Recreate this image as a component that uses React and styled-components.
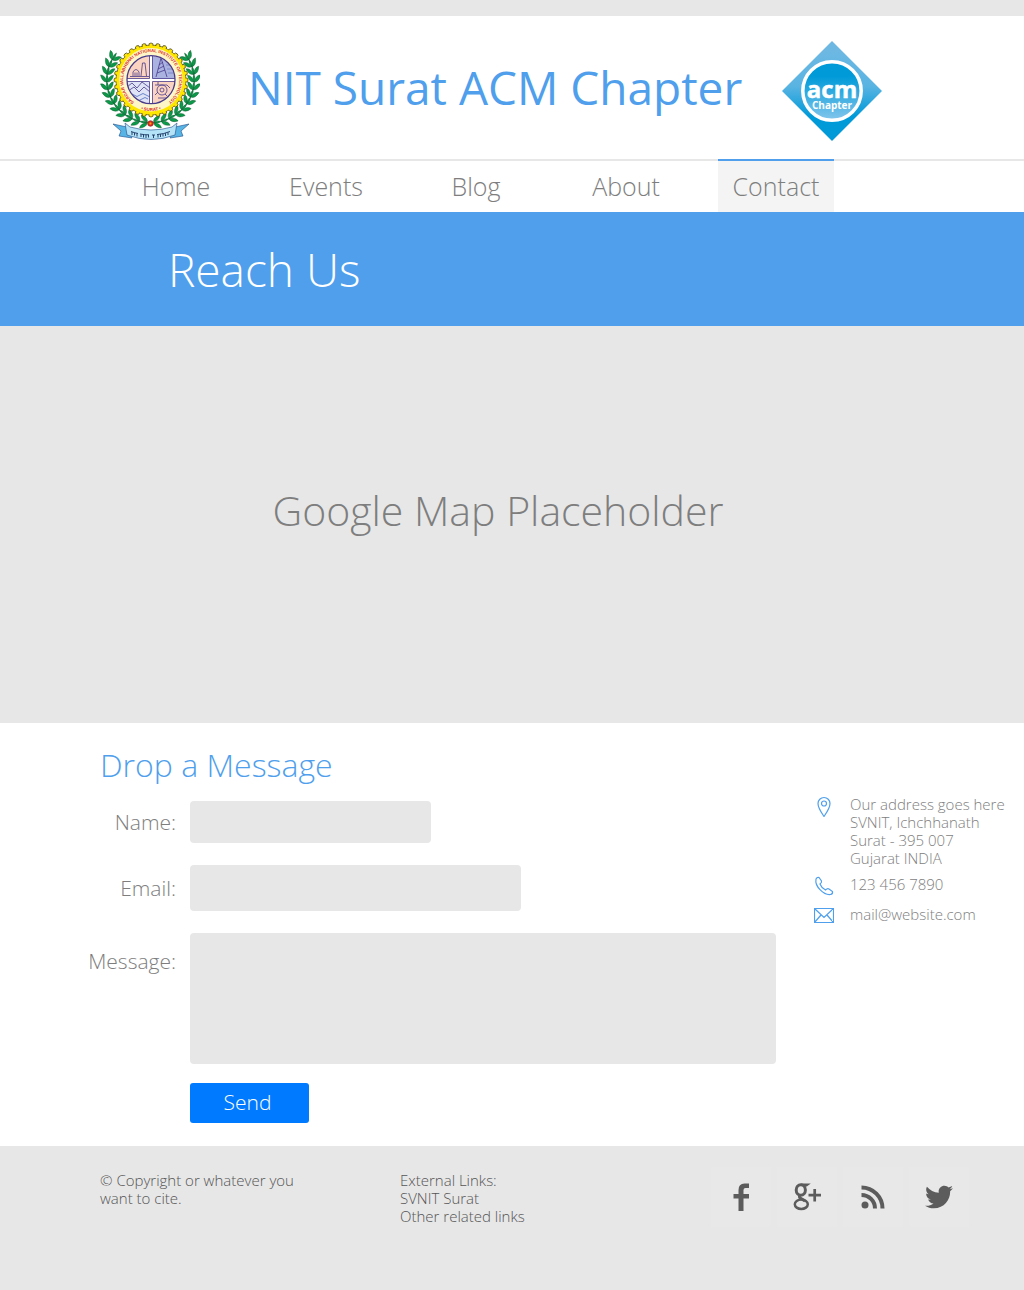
import React from "react";
import styled, { createGlobalStyle } from "styled-components";
import { FaTwitter } from "react-icons/fa";

const blue = "#4f9fed";
const grey = "#e7e7e7";

const GlobalStyle = createGlobalStyle`
  *, *::before, *::after { box-sizing: border-box; }
  body {
    margin: 0;
    background: #fff;
    color: #7e7e7e;
    font-family: "Open Sans", "Noto Sans", sans-serif;
    font-weight: 300;
  }
  input, textarea, button { font: inherit; }
`;

const Page = styled.div`
  min-height: 100vh;
  display: flex;
  flex-direction: column;
  border-top: 16px solid ${grey};
`;

const Header = styled.header`
  display: flex;
  align-items: center;
  gap: 40px;
  padding: 25px 100px 18px;
`;

const SiteTitle = styled.h1`
  margin: 0;
  padding: 0 0 8px 8px;
  color: ${blue};
  font-size: 46px;
  font-weight: 400;
  line-height: 60px;
  white-space: nowrap;
`;

const Nav = styled.nav`
  border-top: 2px solid ${grey};
  padding: 0 101px;
`;

const NavList = styled.ul`
  display: flex;
  margin: -2px 0 0;
  padding: 0;
  list-style: none;
`;

const NavItem = styled.li`
  display: flex;
  justify-content: center;
  flex: 0 0 150px;
`;

const NavLink = styled.a`
  min-width: 116px;
  border-top: 2px solid ${(p) => (p.$active ? blue : "transparent")};
  background: ${(p) => (p.$active ? "#f4f4f4" : "transparent")};
  color: inherit;
  font-size: 25px;
  line-height: 51px;
  text-align: center;
  text-decoration: none;
`;

const Banner = styled.section`
  padding: 25px 168px;
  background: ${blue};
  color: #fff;
`;

const BannerTitle = styled.h2`
  margin: 0;
  font-size: 46px;
  font-weight: 300;
  line-height: 64px;
`;

const MapArea = styled.section`
  display: flex;
  justify-content: center;
  padding: 152px 28px 181px 0;
  background: ${grey};
  font-size: 41px;
  line-height: 64px;
`;

const Main = styled.main`
  display: flex;
  justify-content: space-between;
  align-items: flex-start;
  padding: 20px 22px 23px 86px;
`;

const FormColumn = styled.section`
  flex: 0 1 690px;
`;

const FormTitle = styled.h2`
  margin: 0 0 14px 14px;
  color: ${blue};
  font-size: 32px;
  font-weight: 300;
  line-height: 44px;
`;

const Form = styled.form`
  display: grid;
  grid-template-columns: 90px minmax(0, 586px);
  column-gap: 14px;
  row-gap: 22px;
`;

const Label = styled.label`
  align-self: ${(p) => (p.$top ? "start" : "center")};
  padding-top: ${(p) => (p.$top ? 14 : 0)}px;
  font-size: 21px;
  line-height: 28px;
  text-align: right;
`;

const Field = styled.input`
  width: ${(p) => p.$width}px;
  max-width: 100%;
  height: ${(p) => p.$height}px;
  padding: 0 12px;
  border: 0;
  border-radius: 4px;
  background: ${grey};
`;

const MessageField = styled.textarea`
  display: block;
  width: 100%;
  height: 131px;
  padding: 12px;
  border: 0;
  border-radius: 4px;
  background: ${grey};
  resize: none;
`;

const SendButton = styled.button`
  grid-column: 2;
  justify-self: start;
  width: 119px;
  height: 40px;
  margin-top: -3px;
  padding: 0 4px 2px 0;
  border: 0;
  border-radius: 3px;
  background: #007aff;
  color: #fff;
  font-size: 21px;
`;

const ContactList = styled.address`
  display: grid;
  grid-template-columns: 20px 152px;
  column-gap: 16px;
  row-gap: 8px;
  padding-top: 52px;
  font-size: 15px;
  font-style: normal;
  line-height: 18px;
  white-space: nowrap;
`;

const ContactIcon = styled.svg`
  width: 20px;
  height: 22px;
  fill: none;
  stroke: ${blue};
  stroke-width: 1.2;
`;

const ContactLink = styled.a`
  padding-bottom: 4px;
  color: inherit;
  text-decoration: none;
`;

const Footer = styled.footer`
  display: flex;
  flex: 1;
  align-items: flex-start;
  min-height: 144px;
  padding: 25px 55px 24px 100px;
  background: ${grey};
  color: #555;
  font-size: 15px;
  line-height: 18px;
`;

const FooterText = styled.p`
  flex: 0 0 300px;
  margin: 0;
  padding-right: 84px;
`;

const FooterLinks = styled.div`
  display: flex;
  flex-direction: column;
  align-items: flex-start;
`;

const FooterLink = styled.a`
  color: inherit;
  text-decoration: none;
`;

const Social = styled.div`
  display: flex;
  gap: 6px;
  margin: -4px 0 0 auto;
`;

const SocialLink = styled.a`
  display: flex;
  align-items: center;
  justify-content: center;
  width: 60px;
  height: 60px;
  background: #e8e8e8;
  color: #5c5c5c;
`;

const Svg = styled.svg`
  display: block;
  flex: none;
`;

const teeth = Array.from({ length: 32 }, (_, i) => i * 11.25);
const leaves = Array.from({ length: 12 }, (_, i) => 98 + i * 10.4);

function Wreath() {
  return leaves.map((deg) => {
    const a = (deg * Math.PI) / 180;
    const x = 50.5 + 43.5 * Math.cos(a);
    const y = 39 + 42.5 * Math.sin(a);
    return (
      <g key={deg} transform={`translate(${x} ${y}) rotate(${deg + 90})`} fill="#0a9a48" stroke="#064d27" strokeWidth=".4">
        <path d="M-3 0Q-3-5 4-6.500Q4-2-3 0Z" />
        <path d="M-3 0Q-3 5 4 6.500Q4 2-3 0Z" />
        <path d="M-3 0Q1-2 5 0Q1 2-3 0Z" />
      </g>
    );
  });
}

function Emblem() {
  return (
    <Svg width="100" height="100" viewBox="0 0 100 100" role="img" aria-label="SVNIT emblem">
      <defs>
        <path id="ringTop" d="M34.100 61.200A28 28 0 1 1 69 60.500" />
        <path id="ringBottom" d="M37 66.700A31.300 31.300 0 0 0 65 66.700" />
        <clipPath id="disc"><circle cx="51" cy="38.700" r="23.500" /></clipPath>
      </defs>
      <Wreath />
      <g transform="translate(101 0) scale(-1 1)"><Wreath /></g>
      <g fill="#ffe600" stroke="#3f3a12" strokeWidth=".7">
        <circle cx="51" cy="39" r="35" />
        {teeth.map((a) => (
          <path key={a} transform={`rotate(${a} 51 39)`} d="M48.900 6L49.200 2.600Q51 1.400 52.800 2.600L53.100 6" />
        ))}
      </g>
      <circle cx="51" cy="39" r="34.600" fill="#ffe600" />
      <circle cx="51" cy="38.700" r="31.800" fill="#fff6c8" />
      <g fill="#dc2b20" fontFamily="Liberation Sans, sans-serif" fontSize="4.400" fontWeight="700">
        <text><textPath href="#ringTop">SARDAR VALLABHBHAI NATIONAL INSTITUTE OF TECHNOLOGY</textPath></text>
        <text textAnchor="middle"><textPath href="#ringBottom" startOffset="50%">• SURAT •</textPath></text>
      </g>
      <g clipPath="url(#disc)">
        <path d="M27 15H50V38H27Z" fill="#fbd3c1" />
        <path d="M52 15H76V38H52Z" fill="#aab2e0" />
        <path d="M27 40H50V63H27Z" fill="#dfe3f6" />
        <path d="M52 40H76V63H52Z" fill="#fbd3c1" />
        <g fill="none" stroke="#473a8c" strokeWidth=".8">
          <path d="M30 35.500H49M33 35V31Q36 26 39 31V35M41 35L42.500 22H45L46.500 35M35 35V31.500M37 35V31.500" />
          <path d="M56 36L61 17L67 36M57 32L65 29M58 28L64 25M59 24L63 21" />
          <path d="M66 24H75M67 28H76M68 32H76" stroke="#7080c4" />
          <path d="M27 46L32 42L37 47L42 41L50 47M28 50L34 46L39 51L44 46L50 51" />
          <path d="M28 54Q31 51 34 54T40 54T46 54T52 54M30 58Q33 55 36 58T42 58T48 58" stroke="#4a6dc0" />
          <circle cx="62" cy="49" r="5" />
          <circle cx="62" cy="49" r="2" />
          <path d="M55 44H67L70 47M55 54L58 51M65 53L68 56M58 57H67M58 41V44" />
        </g>
      </g>
      <path d="M51 15V63M27 39H75" stroke="#fff" strokeWidth="2.600" />
      <path d="M49.500 15V37.500H27M52.500 15V37.500H75M49.500 62.500V40.500H27M52.500 62.500V40.500H75" fill="none" stroke="#473a8c" strokeWidth=".8" />
      <circle cx="51" cy="38.700" r="24" fill="none" stroke="#473a8c" strokeWidth="1.300" />
      <g stroke="#1e4a86" strokeWidth=".6" strokeLinejoin="round">
        <path d="M13 83L27 86L32 97L19 95L21 90Z" fill="#58b4e5" />
        <path d="M89 83L75 86L70 97L83 95L81 90Z" fill="#58b4e5" />
        <path d="M25 82L30 86Q51 92 72 86L77 82L75 94Q51 103 27 94Z" fill="#b4e2f7" />
      </g>
      <path d="M31 90.500Q35 92 38 92.500M40 93Q45 94 49 93.800M52 94H55M57 93.600Q64 93 70 90.500M32 91V94M34.500 91.800V94.500M37 92.500V95.500M41 93.500V96M43.500 93.800V96.500M46 94V97M48.500 94V96.500M53.500 94V97M58 93.500V96.500M60.500 93.200V96M63 92.800V95.500M65.500 92.200V95M68 91.500V94" fill="none" stroke="#17325f" strokeWidth=".9" />
      <circle cx="50.500" cy="82.500" r="2.800" fill="#e42c24" stroke="#771611" strokeWidth=".6" />
      <circle cx="50.500" cy="82.500" r="1" fill="#ffb400" />
    </Svg>
  );
}

function AcmLogo() {
  return (
    <Svg width="100" height="100" viewBox="0 0 100 100" role="img" aria-label="ACM Chapter">
      <defs>
        <linearGradient id="outer" x2="0" y2="1">
          <stop offset=".1" stopColor="#6cb8e3" />
          <stop offset=".45" stopColor="#5ab4e2" />
          <stop offset=".75" stopColor="#009ad9" />
        </linearGradient>
        <linearGradient id="inner" x2="0" y2="1">
          <stop offset=".25" stopColor="#009ad9" />
          <stop offset="1" stopColor="#83c6ec" />
        </linearGradient>
      </defs>
      <path d="M50 0L100 50L50 100L0 50Z" fill="url(#outer)" />
      <circle cx="50" cy="50" r="29.200" fill="url(#inner)" stroke="#fff" strokeWidth="3.500" />
      <g fill="#fff" fontFamily="Open Sans, sans-serif" fontWeight="700" textAnchor="middle">
        <text x="50" y="57" fontSize="24" stroke="#fff" strokeWidth=".5">acm</text>
        <text x="50" y="68" fontSize="10">Chapter</text>
      </g>
    </Svg>
  );
}

function FacebookIcon() {
  return (
    <Svg width="28" height="28" viewBox="0 0 28 28" fill="currentColor">
      <path d="M11.500 28V15.500H6.500V11H11.500V7Q11.500 .500 17.500 .500H22V5H18.500Q16.500 5 16.500 7V11H22V15.500H16.500V28Z" />
    </Svg>
  );
}

function GooglePlusIcon() {
  return (
    <Svg width="28" height="28" viewBox="0 0 28 28" fill="none" stroke="currentColor">
      <ellipse cx="7.800" cy="7" rx="4.600" ry="5.300" strokeWidth="3" />
      <ellipse cx="8.300" cy="21.300" rx="6.500" ry="4.700" strokeWidth="2.500" />
      <path d="M8 1.200H15.500L13.500 2.800H11" strokeWidth="1.600" />
      <path d="M7 12.500Q5.500 14 8 15.500L12 18" strokeWidth="3" />
      <path d="M15.500 12.200H28M21.700 6V18.500" strokeWidth="2.700" />
    </Svg>
  );
}

function FeedIcon() {
  return (
    <Svg width="24" height="24" viewBox="0 0 24 24" fill="none" stroke="currentColor" strokeWidth="4">
      <path d="M.500 2.500A21 21 0 0 1 21.500 23.500M.500 10A13.500 13.500 0 0 1 14 23.500" />
      <circle cx="4" cy="20" r="3.500" fill="currentColor" stroke="none" />
    </Svg>
  );
}

const navItems = ["Home", "Events", "Blog", "About", "Contact"];

export default function App() {
  return (
    <Page>
      <GlobalStyle />
      <Header>
        <Emblem />
        <SiteTitle>NIT Surat ACM Chapter</SiteTitle>
        <AcmLogo />
      </Header>
      <Nav>
        <NavList>
          {navItems.map((n) => (
            <NavItem key={n}><NavLink href="#" $active={n === "Contact"}>{n}</NavLink></NavItem>
          ))}
        </NavList>
      </Nav>
      <Banner><BannerTitle>Reach Us</BannerTitle></Banner>
      <MapArea>Google Map Placeholder</MapArea>
      <Main>
        <FormColumn>
          <FormTitle>Drop a Message</FormTitle>
          <Form>
            <Label htmlFor="name">Name:</Label>
            <Field id="name" type="text" $width={241} $height={42} />
            <Label htmlFor="email">Email:</Label>
            <Field id="email" type="email" $width={331} $height={46} />
            <Label htmlFor="message" $top>Message:</Label>
            <MessageField id="message" />
            <SendButton type="button">Send</SendButton>
          </Form>
        </FormColumn>
        <ContactList>
          <ContactIcon viewBox="0 0 20 22"><path d="M10 21.500C7 17 4 13 4 8.500A6 6 0 0 1 16 8.500C16 13 13 17 10 21.500Z" /><circle cx="10" cy="8.500" r="2.500" /></ContactIcon>
          <span>Our address goes here<br />SVNIT, Ichchhanath<br />Surat - 395 007<br />Gujarat INDIA</span>
          <ContactIcon viewBox="0 0 20 22"><path d="M2 4Q3 2 5 2.500L7.500 6Q8 7.500 6 9Q7.500 13 11.500 15Q13.500 13 15 14L18.500 16.500Q19 19 16.500 19.500C10 20.500 .500 11.500 2 4Z" /></ContactIcon>
          <ContactLink href="tel:1234567890">123 456 7890</ContactLink>
          <ContactIcon viewBox="0 0 20 22"><path d="M.500 3.500H19.500V17.500H.500ZL10 12.500L19.500 3.500M.500 17.500L7 10M19.500 17.500L13 10" /></ContactIcon>
          <ContactLink href="mailto:mail@website.com">mail@website.com</ContactLink>
        </ContactList>
      </Main>
      <Footer>
        <FooterText>© Copyright or whatever you want to cite.</FooterText>
        <FooterLinks>
          <span>External Links:</span>
          <FooterLink href="#">SVNIT Surat</FooterLink>
          <FooterLink href="#">Other related links</FooterLink>
        </FooterLinks>
        <Social>
          <SocialLink href="#" aria-label="Facebook"><FacebookIcon /></SocialLink>
          <SocialLink href="#" aria-label="Google Plus"><GooglePlusIcon /></SocialLink>
          <SocialLink href="#" aria-label="News feed"><FeedIcon /></SocialLink>
          <SocialLink href="#" aria-label="Twitter"><FaTwitter size={28} /></SocialLink>
        </Social>
      </Footer>
    </Page>
  );
}
